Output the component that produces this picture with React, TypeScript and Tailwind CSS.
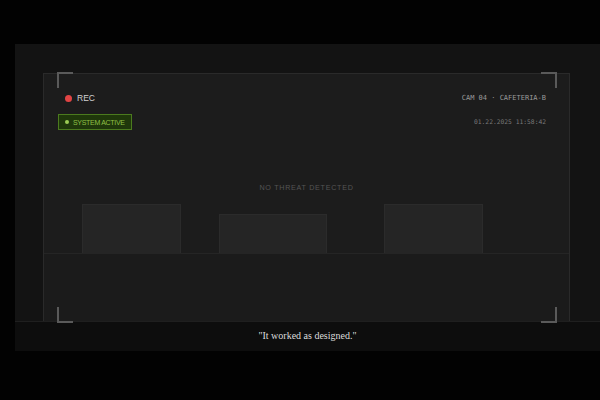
import React from "react";

const sans = { fontFamily: '"Liberation Sans", Arial, sans-serif' };
const mono = { fontFamily: '"DejaVu Sans Mono", "Liberation Mono", monospace' };

// corner bracket of the camera viewfinder
const Bracket = ({ pos }: { pos: string }) => (
  <div className={`absolute w-[16px] h-[16px] border-[#5a5a5a] ${pos}`} />
);

const App = () => {
  return (
    <div className="w-[600px] h-[400px] bg-[#020202] pt-[44px] overflow-hidden">
      <div className="relative ml-[15px] w-[585px] h-[307px] bg-[#131313] flex flex-col">
        {/* camera view */}
        <div className="mt-[29px] ml-[28px] w-[527px] h-[248px] bg-[#1c1c1c] border border-b-0 border-[#2a2a2a] flex flex-col">
          <div className="mt-[19px] h-[10px] flex items-center justify-between pl-[21px] pr-[23px]">
            <div className="flex items-center gap-[5px]">
              <span className="w-[7px] h-[7px] rounded-full bg-[#e14444]" />
              <span className="text-[8.5px] leading-none text-[#d2d2d2]" style={sans}>
                REC
              </span>
            </div>
            <span className="text-[7px] leading-none text-[#9a9a9a]" style={mono}>
              CAM 04 · CAFETERIA-B
            </span>
          </div>

          <div className="mt-[11px] h-[16px] flex items-center justify-between pl-[14px] pr-[23px]">
            <div className="h-[16px] w-[74px] flex items-center gap-[4px] pl-[6px] bg-[#1f370b] border border-[#4b7a1e]">
              <span className="w-[4px] h-[4px] rounded-full bg-[#9ccc55]" />
              <span className="text-[7px] leading-none text-[#8fc046] tracking-[-0.3px]" style={sans}>
                SYSTEM ACTIVE
              </span>
            </div>
            <span className="text-[6.3px] leading-none text-[#7a7a7a]" style={mono}>
              01.22.2025 11:58:42
            </span>
          </div>

          <div className="mt-[53px] h-[10px] flex items-center justify-center">
            <span className="text-[7.2px] leading-none tracking-[0.7px] text-[#545454]" style={sans}>
              NO THREAT DETECTED
            </span>
          </div>

          <div className="mt-[11px] h-[49px] flex items-end">
            <div className="ml-[38px] w-[99px] h-[49px] bg-[#252525] border border-b-0 border-[#2b2b2b]" />
            <div className="ml-[38px] w-[108px] h-[39px] bg-[#252525] border border-b-0 border-[#2b2b2b]" />
            <div className="ml-[57px] w-[99px] h-[49px] bg-[#252525] border border-b-0 border-[#2b2b2b]" />
          </div>
          <div className="flex-1 bg-[#1b1b1b] border-t border-[#252525]" />
        </div>

        {/* caption */}
        <div className="mt-auto h-[30px] pb-[2px] bg-[#0d0d0d] border-t border-[#1f1f1f] flex items-center justify-center">
          <span className="text-[10px] text-[#dcdcdc]" style={{ fontFamily: '"Liberation Serif", "Times New Roman", serif' }}>
            "It worked as designed."
          </span>
        </div>

        <Bracket pos="left-[42px] top-[28px] border-t-2 border-l-2" />
        <Bracket pos="left-[526px] top-[28px] border-t-2 border-r-2" />
        <Bracket pos="left-[42px] top-[263px] border-b-2 border-l-2" />
        <Bracket pos="left-[526px] top-[263px] border-b-2 border-r-2" />
      </div>
    </div>
  );
};

export default App;
